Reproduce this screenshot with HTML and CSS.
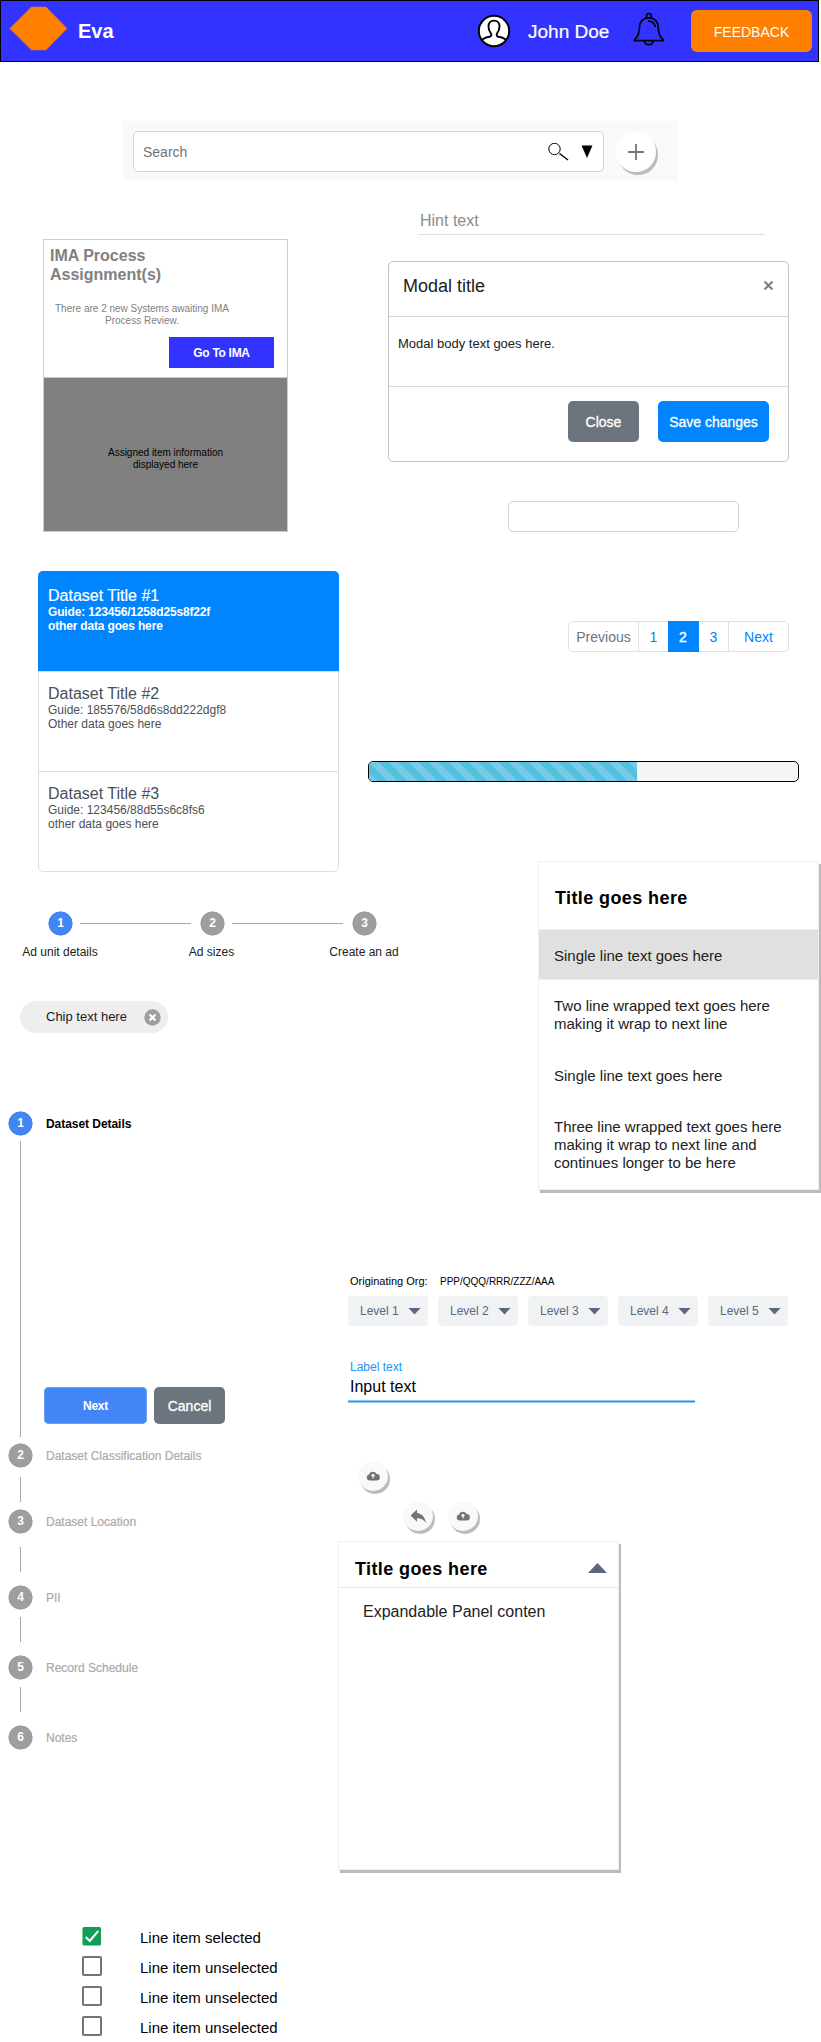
FILE: index.html
```html
<!DOCTYPE html>
<html lang="en">
<head>
<meta charset="utf-8">
<title>Eva</title>
<link rel="stylesheet" href="styles.css">
</head>
<body>
<header class="topbar">
  <svg class="logo" width="58" height="46" viewBox="0 0 58 46"><path d="M.8 23.500 22.500 2h14.500l21 21.500-21 21.500H22.500z" fill="#ff8000" stroke="#c97b3c" stroke-width=".6"/></svg>
  <h1 class="brand">Eva</h1>
  <svg class="avatar" width="34" height="34" viewBox="0 0 34 34"><circle cx="17" cy="17" r="15.200" fill="#fff" stroke="#000" stroke-width="2"/><path d="M5 26c1.500-2 4.500-2.800 7.600-3.300 1.900-.4 2.300-2.200 1-3.900-1.500-2-2.100-3.900-2.100-6.300 0-3.500 2.200-5.900 5.500-5.900s5.500 2.400 5.500 5.900c0 2.400-.6 4.300-2.100 6.300-1.300 1.700-.9 3.500 1 3.900 3.100.5 6.100 1.300 7.600 3.300" fill="none" stroke="#000" stroke-width="1.900"/></svg>
  <span class="user">John Doe</span>
  <svg class="bell" width="32" height="34" viewBox="0 0 32 34" fill="none" stroke="#000" stroke-width="1.700"><path d="M13.500 6.200V3.700c0-1.400 1-2.200 2.300-2.200s2.300.8 2.300 2.200v2.500"/><path d="M15.800 5.800c-5.600 0-9.300 3.900-9.300 9.300 0 6.900-2 9.400-5 12.700v.9h28.700v-.9c-3-3.300-5-5.800-5-12.700 0-5.400-3.800-9.300-9.400-9.300z"/><path d="M15 9c4 .1 6.800 2.200 7.300 6"/><path d="M11.600 29c.2 2.400 1.700 3.700 4.200 3.700s4-1.300 4.200-3.700"/></svg>
  <button class="feedback">FEEDBACK</button>
</header>

<section class="search">
  <div class="search-box">
    <span class="search-hint">Search</span>
    <svg width="22" height="20" viewBox="0 0 22 20" fill="none" stroke="#000"><circle cx="7.500" cy="6" r="5.700" stroke-width="1"/><path d="m12.500 10.500 8.500 6.500" stroke-width="1.400"/></svg>
    <svg class="search-caret" width="12" height="14" viewBox="0 0 12 14"><path d="M.5.5h11L6 13z"/></svg>
  </div>
  <button class="round add"><svg width="18" height="18" viewBox="0 0 18 18" stroke="#777" stroke-width="1.800"><path d="M9 1v16M1 9h16"/></svg></button>
</section>

<main class="columns">
  <div class="left">
    <article class="ima">
      <div class="ima-top">
        <h2>IMA Process<br>Assignment(s)</h2>
        <p>There are 2 new Systems awaiting IMA<br>Process Review.</p>
        <button>Go To IMA</button>
      </div>
      <p class="ima-detail">Assigned item information<br>displayed here</p>
    </article>

    <ul class="datasets">
      <li class="active"><h3>Dataset Title #1</h3><p>Guide: 123456/1258d25s8f22f<br>other data goes here</p></li>
      <li><h3>Dataset Title #2</h3><p>Guide: 185576/58d6s8dd222dgf8<br>Other data goes here</p></li>
      <li><h3>Dataset Title #3</h3><p>Guide: 123456/88d55s6c8fs6<br>other data goes here</p></li>
    </ul>

    <div class="stepper">
      <div class="stepper-dots"><b class="dot on">1</b><i></i><b class="dot">2</b><i></i><b class="dot">3</b></div>
      <div class="stepper-labels"><span>Ad unit details</span><span>Ad sizes</span><span>Create an ad</span></div>
    </div>

    <div class="chip"><span>Chip text here</span>
      <svg width="17" height="17" viewBox="0 0 17 17"><circle cx="8.500" cy="8.500" r="8.200" fill="#9e9e9e"/><path d="m5.500 5.500 6 6m0-6-6 6" stroke="#fff" stroke-width="2.200"/></svg>
    </div>

    <ol class="steps">
      <li class="step step-open"><div class="step-head"><b class="dot on">1</b><span>Dataset Details</span></div>
        <div class="step-body"><i></i><div class="actions"><button class="next">Next</button><button class="cancel">Cancel</button></div></div></li>
      <li class="step step-2"><div class="step-head"><b class="dot">2</b><span>Dataset Classification Details</span></div><div class="step-body"><i></i></div></li>
      <li class="step step-3"><div class="step-head"><b class="dot">3</b><span>Dataset Location</span></div><div class="step-body"><i></i></div></li>
      <li class="step"><div class="step-head"><b class="dot">4</b><span>PII</span></div><div class="step-body"><i></i></div></li>
      <li class="step"><div class="step-head"><b class="dot">5</b><span>Record Schedule</span></div><div class="step-body"><i></i></div></li>
      <li class="step step-last"><div class="step-head"><b class="dot">6</b><span>Notes</span></div></li>
    </ol>

    <ul class="checks">
      <li><svg width="20" height="20" viewBox="0 0 20 20"><rect x=".5" y="1" width="18.500" height="18.500" rx="1.500" fill="#0f9d58"/><path d="m3.700 11 4 4 8.500-10" fill="none" stroke="#fff" stroke-width="2"/></svg><span>Line item selected</span></li>
      <li><i class="box"></i><span>Line item unselected</span></li>
      <li><i class="box"></i><span>Line item unselected</span></li>
      <li><i class="box"></i><span>Line item unselected</span></li>
    </ul>
  </div>

  <div class="right">
    <div class="hint">Hint text</div>

    <section class="modal">
      <header><h2>Modal title</h2><svg width="11" height="11" viewBox="0 0 11 11" stroke="#808080" stroke-width="2.200"><path d="m1.500 1.500 8 8m0-8-8 8"/></svg></header>
      <p>Modal body text goes here.</p>
      <footer><button class="close">Close</button><button class="save">Save changes</button></footer>
    </section>

    <div class="blank-input"></div>

    <nav class="pages"><span class="prev">Previous</span><a>1</a><a class="current">2</a><a>3</a><a class="last">Next</a></nav>

    <div class="progress"><div class="progress-fill"></div></div>

    <section class="menu">
      <h2>Title goes here</h2>
      <p class="picked">Single line text goes here</p>
      <p>Two line wrapped text goes here making it wrap to next line</p>
      <p>Single line text goes here</p>
      <p>Three line wrapped text goes here making it wrap to next line and continues longer to be here</p>
    </section>

    <div class="org"><span>Originating Org:</span><small>PPP/QQQ/RRR/ZZZ/AAA</small></div>
    <div class="levels">
      <div>Level 1<i></i></div><div>Level 2<i></i></div><div>Level 3<i></i></div><div>Level 4<i></i></div><div>Level 5<i></i></div>
    </div>

    <div class="field"><label>Label text</label><div class="value">Input text</div></div>

    <div class="tools first">
      <button class="round"><svg width="14" height="10" viewBox="0 0 14 10"><path d="M3.400 9.500A3 3 0 0 1 3 3.600a4 4 0 0 1 7.500-.5A3.200 3.200 0 0 1 10.700 9.500z" fill="#737373"/><path d="M7 2.500 9.300 5H7.700v2.200H6.300V5H4.700z" fill="#fff"/></svg></button>
    </div>
    <div class="tools second">
      <button class="round"><svg width="17" height="15" viewBox="0 0 17 15"><path d="M.5 6.500 7 .5V4c4.500.5 8 4 9 10C13.500 10.500 11 9.300 7 9.200v3.600z" fill="#737373"/></svg></button>
      <button class="round"><svg width="14" height="10" viewBox="0 0 14 10"><path d="M3.400 9.500A3 3 0 0 1 3 3.600a4 4 0 0 1 7.500-.5A3.200 3.200 0 0 1 10.700 9.500z" fill="#737373"/><path d="M7 2.500 9.300 5H7.700v2.200H6.300V5H4.700z" fill="#fff"/></svg></button>
    </div>

    <section class="expand">
      <header><h2>Title goes here</h2><svg width="19" height="10" viewBox="0 0 19 10"><path d="M9.500 0 19 10H0z" fill="#596780"/></svg></header>
      <p>Expandable Panel conten</p>
    </section>
  </div>
</main>
</body>
</html>
```
FILE: styles.css
```css
* { box-sizing: border-box; }
body { margin: 0; width: 821px; height: 2042px; background: #fff; color: #212121; font: 12px/14px "Liberation Sans", Arial, sans-serif; }
h1, h2, h3, p, ul, ol { margin: 0; padding: 0; font-weight: normal; }
ul, ol { list-style: none; }
button { font: inherit; border: 0; padding: 0; color: #fff; -webkit-text-stroke: .3px currentColor; }
svg { display: block; flex: none; }

/* Top bar */
.topbar { display: flex; width: 819px; height: 62px; background: #33f; border: 1px solid #000; color: #fff; }
.logo { margin: 4px 0 0 8px; }
.brand { margin: 19px 0 0 11px; font-weight: bold; font-size: 20px; line-height: 22px; width: 396px; }
.avatar { margin: 13px 0 0 3px; }
.user { margin: 20px 0 0 17px; width: 86px; font-size: 19px; line-height: 22px; white-space: nowrap; -webkit-text-stroke: .2px #fff; }
.bell { margin: 11px 0 0 19px; }
.feedback { margin: 9px 0 0 26px; width: 121px; height: 42px; border-radius: 6px; background: #ff8000; font-size: 14px; padding-top: 2px; -webkit-text-stroke: 0; }

/* Search strip */
.search { display: flex; align-items: flex-start; margin: 59px 0 0 123px; width: 555px; height: 60px; padding: 10px 0 0 10px; background: #f8f9fb; }
.search-box { display: flex; width: 471px; height: 41px; border: 1px solid #ced4da; border-radius: 5px; background: #fff; padding: 11px 0 0 9px; }
.search-hint { width: 404px; font-size: 14px; line-height: 18px; color: #6c757d; }
.search-caret { margin: 2px 0 0 12px; }
.round { display: flex; align-items: center; justify-content: center; width: 30px; height: 30px; border-radius: 50%; background: #f8f9fb; box-shadow: 2px 3px 0 #bbb; }
.add { width: 40px; height: 40px; margin: .5px 0 0 12px; background: #fff; }

.columns { display: grid; grid-template-columns: 338px 483px; }

/* Assignment card */
.ima { margin: 58px 0 0 43px; width: 245px; height: 293px; border: 1px solid #ccc; }
.ima-top { height: 138px; border-bottom: 1px solid #ccc; color: #808080; display: flex; flex-direction: column; align-items: flex-start; }
.ima-top h2 { margin: 6px 0 0 6px; font-size: 16px; line-height: 19px; font-weight: bold; }
.ima-top p { margin: 19px 0 0 11px; font-size: 10px; line-height: 12px; text-align: center; }
.ima-top button { margin: 10px 0 0 125px; width: 105px; height: 31px; background: #33f; font-weight: bold; font-size: 12px; letter-spacing: -.3px; -webkit-text-stroke: 0; }
.ima-detail { height: 153px; padding-top: 69px; background: #808080; color: #000; font-size: 10px; line-height: 12px; text-align: center; }

/* Dataset list */
.datasets { margin: 39px 0 0 38px; width: 301px; height: 301px; border: 1px solid #dcdedf; border-radius: 5px; color: #495057; }
.datasets li { height: 100px; padding: 13px 0 0 9px; border-bottom: 1px solid #dcdedf; }
.datasets li:last-child { border: 0; }
.datasets h3 { font-size: 16px; line-height: 18px; }
.datasets .active { margin: -1px -1px 0; height: 101px; padding: 16px 0 0 10px; background: #0085ff; border-radius: 5px 5px 0 0; color: #fff; }
.active h3 { -webkit-text-stroke: .2px #fff; }
.active p { font-weight: bold; letter-spacing: -.17px; }

/* Horizontal stepper */
.dot { display: block; flex: none; width: 25px; height: 25px; background: radial-gradient(circle, #9e9e9e 11.800px, transparent 12.300px); color: #fff; line-height: 25px; text-align: center; }
.dot.on { background: radial-gradient(circle, #4285f4 11.800px, transparent 12.300px); }
.stepper { margin-top: 39px; width: 425px; }
.stepper-dots { display: flex; align-items: center; padding-left: 48px; }
.stepper-dots i { width: 111px; height: 1px; margin: 0 9px 0 7px; background: #a6a6a6; }
.stepper-labels { display: grid; grid-template-columns: 120px 183px 122px; margin-top: 9px; text-align: center; }

/* Chip */
.chip { display: flex; align-items: center; justify-content: space-between; margin: 42px 0 0 20px; width: 148px; height: 32px; padding: 0 7px 0 26px; border-radius: 16px; background: #eee; font-size: 13px; }

/* Vertical stepper */
.steps { margin: 78px 0 0 8px; }
.step { height: 70px; color: #aaa; }
.step-head { display: flex; align-items: center; gap: 13px; height: 25px; }
.step-head span { -webkit-text-stroke: .2px currentColor; }
.step-body { display: flex; padding-left: 12px; }
.step i { width: 1px; height: 25px; margin-top: 7px; background: #a6a6a6; }
.step-open { height: 332px; }
.step-open span { color: #000; font-weight: bold; letter-spacing: -.05px; -webkit-text-stroke: 0; }
.step-open i { height: 296px; margin-top: 5px; }
.step-2 { height: 66px; }
.step-2 i { margin-top: 9px; }
.step-3 { height: 76px; }
.step-3 i { margin-top: 13px; }
.step-last { height: 25px; }
.actions { display: flex; gap: 7px; margin: 251px 0 0 23px; }
.actions button { height: 37px; border-radius: 5px; }
.next { width: 103px; background: #4285f4; font-weight: bold; letter-spacing: -.3px; box-shadow: inset 0 0 0 1px #6f9ff0; }
.actions .next { -webkit-text-stroke: 0; }
.cancel { width: 71px; background: #6c757d; font-size: 14px; }

/* Checklist */
.checks { margin-top: 171px; color: #000; font-size: 15px; }
.checks li { display: flex; align-items: center; gap: 38px; height: 30px; padding-left: 82px; }
.checks span { padding-top: 3px; line-height: 18px; }
.box { width: 20px; height: 20px; border: 2px solid #757575; border-radius: 2px; }

/* Hint and modal */
.hint { margin: 29px 0 0 80px; width: 347px; height: 25px; padding-left: 2px; border-bottom: 1px solid #e0e0e0; color: #8c8c8c; font-size: 16px; line-height: 21px; }
.modal { margin: 26px 0 0 50px; width: 401px; height: 201px; border: 1px solid #c4c4c4; border-radius: 5px; }
.modal header { display: flex; justify-content: space-between; height: 55px; padding: 14px 14px 0; border-bottom: 1px solid #d8d8d8; }
.modal h2 { font-size: 18px; line-height: 20px; }
.modal header svg { margin-top: 4px; }
.modal p { height: 70px; padding: 18px 0 0 9px; border-bottom: 1px solid #d8d8d8; font-size: 13px; line-height: 18px; }
.modal footer { display: flex; justify-content: flex-end; gap: 19px; padding: 14px 19px 0 0; }
.modal button { height: 41px; border-radius: 5px; font-size: 14px; }
.close { width: 71px; background: #6c757d; }
.save { width: 111px; background: #0085ff; }
.blank-input { margin: 39px 0 0 170px; width: 231px; height: 31px; border: 1px solid #ced4da; border-radius: 5px; }

/* Pagination */
.pages { display: flex; margin: 89px 0 0 230px; width: 221px; height: 31px; border: 1px solid #dee2e6; border-radius: 5px; font-size: 14px; line-height: 30px; text-align: center; color: #0085ff; }
.pages > * { width: 30px; border-right: 1px solid #dee2e6; }
.pages .prev { width: 70px; color: #6c757d; }
.pages .current { margin: -1px 0 -1px -1px; width: 31px; padding-top: 1px; background: #0085ff; color: #fff; border-color: #0085ff; -webkit-text-stroke: .4px #fff; }
.pages .last { width: 59px; border: 0; }

/* Progress */
.progress { margin: 109px 0 0 30px; width: 431px; height: 21px; border: 1px solid #000; border-radius: 5px; background: #f5f5f5; overflow: hidden; }
.progress-fill { width: 268px; height: 19px; background: linear-gradient(45deg, #75cbe6 25%, #55bfdf 25% 50%, #75cbe6 50% 75%, #55bfdf 75%) 0 0 / 20px 20px; }

/* Menu panel */
.menu, .expand { width: 281px; height: 329px; border: 1px solid #eee; background: #fff; box-shadow: 2px 3px 0 #bbb; color: #000; }
.menu { margin: 79px 0 0 200px; font-size: 15px; line-height: 18px; }
.menu h2, .expand h2 { font-size: 18px; line-height: 22px; font-weight: bold; letter-spacing: .4px; }
.menu h2 { height: 67px; padding: 25px 0 0 16px; }
.menu p { padding: 17px 30px 0 15px; height: 70px; color: #212121; }
.menu .picked { height: 51px; background: #e0e0e0; border: solid #eee; border-width: 1px 0; }
.menu p:nth-of-type(3) { height: 51px; }

/* Organisation picker */
.org { display: flex; align-items: baseline; height: 14px; margin: 84px 0 0 12px; font-size: 11px; color: #000; }
.org span { width: 90px; }
.org small { font-size: 10px; }
.levels { display: flex; gap: 10px; margin: 8px 0 0 10px; }
.levels div { display: flex; align-items: center; justify-content: space-between; width: 80px; height: 30px; padding: 0 7px 0 12px; border-radius: 4px; background: #f1f2f4; color: #596780; white-space: nowrap; }
.levels i { width: 13px; height: 7px; background: #596780; clip-path: polygon(0 0, 100% 0, 50% 100%); }

/* Text field */
.field { margin: 34px 0 0 10px; width: 347px; }
.field label { display: block; padding-left: 2px; color: #2196f3; }
.value { margin-top: 3px; height: 26px; padding-left: 2px; background: linear-gradient(#2196f3, #2196f3) 0 24px / 100% 1px no-repeat, linear-gradient(#90caf9, #90caf9) 0 23px / 100% 3px no-repeat; color: #000; font-size: 16px; line-height: 20px; }

.tools { display: flex; }
.first { margin: 58px 0 0 20px; }
.second { margin: 10px 0 0 65px; gap: 15px; }

/* Expandable panel */
.expand { margin-top: 10px; }
.expand header { display: flex; height: 46px; padding: 16px 11px 0 16px; border-bottom: 1px solid #e4e4e4; }
.expand header svg { margin: 5px 0 0 auto; }
.expand p { padding: 15px 0 0 24px; font-size: 16px; line-height: 18px; color: #212121; }
```
